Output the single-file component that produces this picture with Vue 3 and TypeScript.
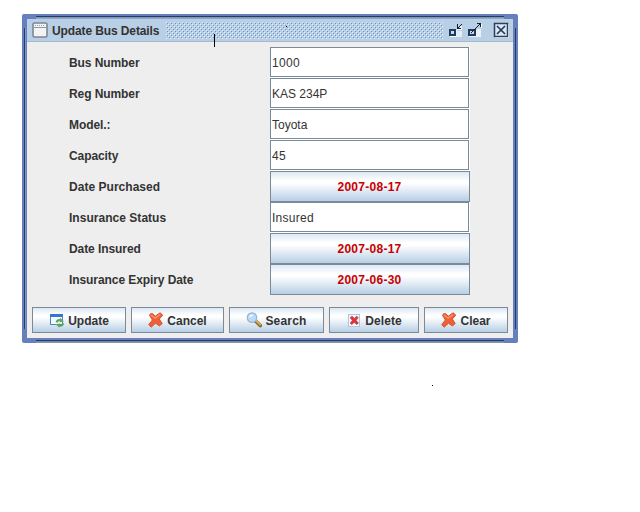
<script setup lang="ts">
interface Field {
  label: string
  value: string
  kind: 'text' | 'date'
  key: string
}

const fields: Field[] = [
  { key: 'number', label: 'Bus Number', value: '1000', kind: 'text' },
  { key: 'reg', label: 'Reg Number', value: 'KAS 234P', kind: 'text' },
  { key: 'model', label: 'Model.:', value: 'Toyota', kind: 'text' },
  { key: 'capacity', label: 'Capacity', value: '45', kind: 'text' },
  { key: 'purchased', label: 'Date Purchased', value: '2007-08-17', kind: 'date' },
  { key: 'status', label: 'Insurance Status', value: 'Insured', kind: 'text' },
  { key: 'insured', label: 'Date Insured', value: '2007-08-17', kind: 'date' },
  { key: 'expiry', label: 'Insurance Expiry Date', value: '2007-06-30', kind: 'date' },
]

const actions: string[] = ['Update', 'Cancel', 'Search', 'Delete', 'Clear']
</script>

<template>
  <main class="desktop">
    <section class="frame">
      <i class="edge top"></i><i class="edge bottom"></i><i class="edge left"></i><i class="edge right"></i>
      <div class="inside">
        <header class="titlebar">
          <svg class="win-icon" width="16" height="16" viewBox="0 0 16 16">
            <rect x="1" y="1" width="14" height="14" rx="1.5" fill="#f3f3f3" stroke="#7b8794" stroke-width="1.6" />
            <path d="M2 5.5H14" stroke="#8e99a4" />
            <path d="M3 3.5H13" stroke="#9ba5ae" stroke-dasharray="1 1" />
          </svg>
          <h1>Update Bus Details</h1>
          <svg class="bumps" width="277" height="17">
            <defs>
              <pattern id="bump" width="4" height="4" patternUnits="userSpaceOnUse">
                <path d="M0 0h1v1H0zM2 2h1v1H2z" fill="#e4effa" />
                <path d="M1 1h1v1H1zM3 3h1v1H3z" fill="#6a93c0" />
              </pattern>
            </defs>
            <rect width="277" height="17" fill="url(#bump)" />
          </svg>
          <svg class="ctl" width="16" height="16" viewBox="0 0 16 16" shape-rendering="crispEdges">
            <path d="M2 8h7v7H2z" fill="#fff" />
            <path d="M8 9h6v6H8zM12 4h2v4h-2z" fill="#e4eef8" />
            <rect x="2" y="8" width="5" height="5" fill="#c5daf0" stroke="#233b5b" stroke-width="2" />
            <path d="M9 2h1v3h1V4h1V3h1V2h1v1h-1v1h-1v1h-1v1h2v1H9z" fill="#15202e" />
            <path d="M9 7h5v1H9z" fill="#fff" />
          </svg>
          <svg class="ctl max" width="16" height="16" viewBox="0 0 16 16" shape-rendering="crispEdges">
            <path d="M2 8h8v7H2zM10 7h4v8h-4z" fill="#e9f2fa" />
            <rect x="2" y="8" width="6" height="5" fill="#c5daf0" stroke="#233b5b" stroke-width="2" />
            <path d="M10 1h4v4h-1V3h-1v1h-1v1h-1v1H9v1H8v1H7v1H6v1H5v1H4v-1h1V9h1V8h1V7h1V6h1V5h1V4h1V3h1V2h-2z" fill="#15202e" />
            <path d="M14 2h1v4h-1z" fill="#fff" />
          </svg>
          <svg class="ctl close" width="16" height="16" viewBox="0 0 16 16">
            <path d="M2 15.5H15.5V2" fill="none" stroke="#fff" />
            <rect x="1.5" y="1.5" width="13" height="13" fill="#d9e8f6" stroke="#2b405b" stroke-width="1.5" />
            <path d="M4 4L12 12M12 4L4 12" stroke="#22364f" stroke-width="1.6" />
          </svg>
        </header>

        <form class="form" @submit.prevent>
          <div v-for="f in fields" :key="f.key" class="row">
            <label :class="'for-' + f.key">{{ f.label }}</label>
            <div v-if="f.kind === 'text'" class="field">
              <div class="input" :class="f.key">{{ f.value }}</div>
            </div>
            <button v-else type="button" class="metal date">{{ f.value }}</button>
          </div>
        </form>

        <footer class="actions">
          <button v-for="a in actions" :key="a" type="button" class="metal action" :class="a.toLowerCase()">
            <svg v-if="a === 'Update'" width="16" height="16" viewBox="0 0 16 16">
              <rect x="1.5" y="2.5" width="12" height="10" fill="#f6faff" stroke="#4a86d0" />
              <path d="M1 2h13v3H1z" fill="#3677cc" />
              <path d="M7.5 10.5Q8.5 7.3 12 8.2" fill="none" stroke="#59a35a" stroke-width="2" />
              <path d="M11 5.8L15 9.2L10.6 10.4Z" fill="#62aa62" />
              <path d="M14.2 11.2Q13.2 14.3 9.8 13.5" fill="none" stroke="#59a35a" stroke-width="2" />
              <path d="M10.8 11.2L6.8 12.4L10.4 15.8Z" fill="#62aa62" />
            </svg>
            <svg v-else-if="a === 'Search'" width="16" height="16" viewBox="0 0 16 16">
              <path d="M9.5 9L14.3 13.5" stroke="#806332" stroke-width="3.6" stroke-linecap="round" />
              <path d="M10 8.8L14.3 12.7" stroke="#dba94f" stroke-width="2" stroke-linecap="round" />
              <circle cx="6" cy="5.6" r="4.8" fill="#b9dafa" stroke="#9eb4cc" stroke-width="1.2" />
              <path d="M3 6Q3 2.5 6.5 2.4Q8 3.6 5.5 4.6Q3.8 5.2 3 6" fill="#edf8ff" />
            </svg>
            <svg v-else-if="a === 'Delete'" width="16" height="16" viewBox="0 0 16 16">
              <rect x="2.5" y="2.5" width="11" height="12" fill="#f9fcff" stroke="#a9c5e3" />
              <path d="M4 5.8L6 4L8.3 6.3L10.7 4L12.4 5.8L10.2 8.3L12.6 11L10.8 12.8L8.2 10.4L5.8 12.8L4 11L6.3 8.4Z" fill="#e0343a" stroke="#b6454a" stroke-width=".5" />
            </svg>
            <svg v-else width="16" height="16" viewBox="0 0 16 16">
              <path d="M1.4 3Q2.5 1.2 4.4 1.5L7.2 4.2L12.1 .8L14.8 3.2L11.3 7L14.2 11.6L11.4 13.9L7.5 11.2L3.1 15.2L.8 12.6L4.4 8Z" fill="#ed6038" stroke="#d4532f" stroke-width="1" stroke-linejoin="round" />
              <path d="M3 3.1L7.2 6.2L12.1 2.5" fill="none" stroke="#ff9a68" stroke-width="1.3" />
            </svg>
            <span>{{ a }}</span>
          </button>
        </footer>
      </div>
    </section>
    <i class="caret"></i><i class="speck one"></i><i class="speck two"></i>
  </main>
</template>

<style>
body { margin: 0; background: #fff; }
</style>

<style scoped>
* { box-sizing: border-box; }
.desktop {
  position: relative;
  width: 640px;
  height: 512px;
  padding: 14px 0 0 22px;
  overflow: hidden;
  background: #fff;
  color: #333;
  font: bold 12px/16px "Liberation Sans", Arial, sans-serif;
}
.frame { position: relative; width: 496px; height: 329px; padding: 5px; background: #6580bb; border-radius: 2px; }
.inside { height: 319px; background: #eee; display: flex; flex-direction: column; }
.edge { position: absolute; background: #26396b; }
.top { left: 14px; right: 14px; top: 2px; height: 1px; box-shadow: 0 1px #7f98b5, 0 2px #8fa7c4; }
.bottom { left: 14px; right: 14px; bottom: 2px; height: 1px; box-shadow: 0 1px #758baa, 0 2px #8294a8; }
.left { left: 2px; top: 14px; bottom: 14px; width: 1px; box-shadow: 1px 0 #7f98c8; }
.right { right: 2px; top: 14px; bottom: 14px; width: 1px; }
.titlebar {
  height: 23px;
  flex: none;
  display: flex;
  align-items: center;
  padding-left: 5px;
  background: #b8cfe5;
  border-bottom: 1px solid #a3b8cc;
}
.win-icon { flex: none; }
h1 { flex: none; width: 113px; margin: 1px 0 0 4px; font: inherit; white-space: nowrap; letter-spacing: -0.11px; }
.bumps { flex: none; margin-left: 1px; }
.ctl { flex: none; margin-left: 5px; }
.ctl.max { margin-left: 3px; }
.ctl.close { margin-left: 10px; }
.form { padding: 5px 0 0 42px; }
.row { display: flex; height: 31px; }
label { width: 201px; padding-top: 8px; white-space: nowrap; letter-spacing: -0.08px; }
.for-purchased, .for-status { letter-spacing: 0.03px; }
.field { width: 200px; height: 31px; padding: 0 1px 1px 0; background: #fff; }
.input {
  height: 30px;
  padding: 7px 0 0 1px;
  background: #fff;
  border: 1px solid #7a8a99;
  font-weight: normal;
}
.number, .capacity { letter-spacing: 0.3px; }
.status { letter-spacing: 0.28px; }
.metal {
  display: flex;
  align-items: center;
  justify-content: center;
  margin: 0;
  padding: 0;
  border: 1px solid #7a8a99;
  border-radius: 0;
  background: linear-gradient(#dde8f3 0%, #fff 30%, #fff 38%, #b8cfe5 100%);
  color: #333;
  font: inherit;
}
.date { width: 200px; height: 31px; padding-right: 1px; color: #c80000; letter-spacing: 0.27px; }
.actions { display: flex; gap: 5px; padding: 12px 0 0 5px; }
.action { height: 26px; gap: 3px; }
.action span { padding-top: 1px; }
.update { width: 94px; }
.cancel { width: 93px; }
.search { width: 95px; letter-spacing: 0.2px; }
.delete { width: 90px; letter-spacing: 0.1px; }
.clear { width: 84px; }
.caret { position: absolute; left: 214px; top: 34px; width: 1px; height: 13px; background: #000; }
.speck { position: absolute; width: 1px; height: 1px; background: #000; }
.one { left: 286px; top: 26px; }
.two { left: 432px; top: 385px; }
</style>
